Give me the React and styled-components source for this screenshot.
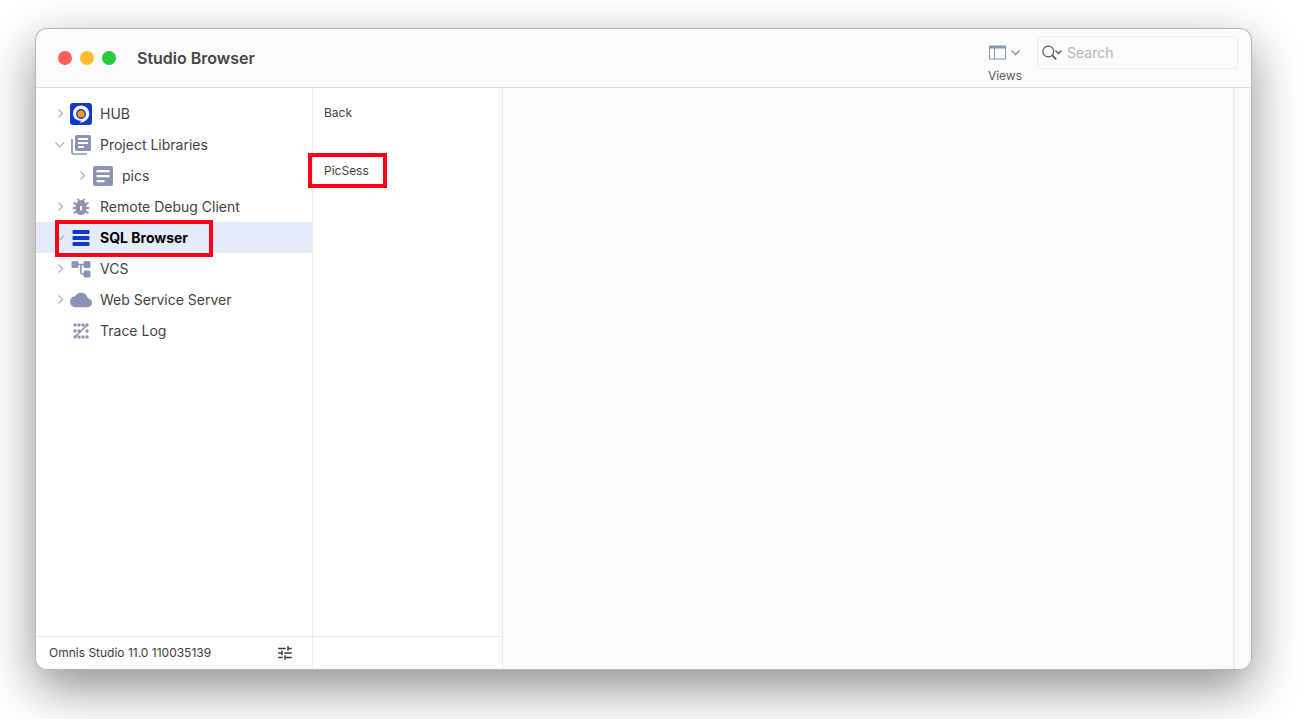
import React from "react";
import styled, { createGlobalStyle, css } from "styled-components";
import { MdCloud, MdTune } from "react-icons/md";

const GlobalStyle = createGlobalStyle`
  *, *::before, *::after {
    box-sizing: border-box;
  }
  body {
    margin: 0;
    overflow: hidden;
    background: #ffffff;
    color: #434343;
    font-family: Inter, "Liberation Sans", sans-serif;
  }
  button, input {
    font: inherit;
    color: inherit;
  }
`;

const Desktop = styled.div`
  display: flex;
  min-height: 100vh;
  padding: 29px 48px 50px 36px;
`;

const Window = styled.main`
  flex: 1;
  display: flex;
  flex-direction: column;
  min-width: 0;
  border-radius: 11px;
  background: #fbfbfb;
  box-shadow: 0 0 0 1px #b8b8b8, 0 18px 50px rgba(0, 0, 0, 0.46);
`;

const TitleBar = styled.header`
  display: flex;
  align-items: center;
  height: 59px;
  padding: 0 13px 0 22px;
  border-bottom: 1px solid #dcdcdc;
`;

const Lights = styled.div`
  display: flex;
  gap: 8px;
`;

const Light = styled.button`
  width: 14px;
  height: 14px;
  padding: 0;
  border: 0;
  border-radius: 50%;
  background: ${({ $color }) => $color};
`;

const Title = styled.h1`
  flex: 1;
  margin: 0 0 0 21px;
  font-size: 16px;
  font-weight: 600;
  line-height: 20px;
  color: #464646;
`;

const ViewsButton = styled.button`
  display: flex;
  flex-direction: column;
  align-items: center;
  gap: 8px;
  padding: 13px 0 0;
  border: 0;
  background: none;
  font-size: 12px;
  line-height: 16px;
  color: #5d5d5d;
`;

const SearchBox = styled.label`
  align-self: flex-start;
  display: flex;
  align-items: center;
  gap: 5px;
  width: 201px;
  height: 33px;
  margin: 7px 0 0 15px;
  padding: 0 4px;
  border: 1px solid #ececec;
  border-radius: 5px;
`;

const SearchInput = styled.input`
  flex: 1;
  min-width: 0;
  padding: 0;
  border: 0;
  outline: 0;
  background: none;
  font-size: 14px;

  &::placeholder {
    color: #b5b5b5;
    opacity: 1;
  }
`;

const Body = styled.div`
  flex: 1;
  display: flex;
`;

const panel = css`
  display: flex;
  flex-direction: column;
  border-right: 1px solid #ebebeb;
  background: #ffffff;
`;

const Sidebar = styled.nav`
  ${panel}
  width: 277px;
  border-radius: 0 0 0 11px;
`;

const Actions = styled.section`
  ${panel}
  width: 190px;
`;

const List = styled.ul`
  flex: 1;
  margin: 0;
  padding: 10px 0 0;
  list-style: none;
`;

const ActionList = styled(List)`
  padding: 15px 12px 0 11px;
`;

const TreeItem = styled.li`
  position: relative;
  display: flex;
  align-items: center;
  height: 31px;
  padding-left: ${({ $level }) => ($level ? 40 : 18)}px;
  background: ${({ $selected }) => ($selected ? "#e5ecf9" : "none")};
`;

const Toggle = styled.span`
  display: flex;
  justify-content: center;
  width: 13px;
`;

const TreeButton = styled.button`
  display: flex;
  align-items: center;
  gap: 6px;
  padding: 0 0 0 1px;
  border: 0;
  background: none;
  font-size: 14px;
  line-height: 20px;
  font-weight: ${({ $selected }) => ($selected ? 700 : 400)};
  color: ${({ $selected }) => ($selected ? "#000000" : "#434343")};
`;

const IconSlot = styled.span`
  display: flex;
  align-items: center;
  justify-content: center;
  width: 26px;
  height: 26px;
  color: #8b95b1;
`;

const ActionItem = styled.li`
  position: relative;
  display: flex;
  height: 20px;
  margin-bottom: 38px;
`;

const ActionButton = styled.button`
  padding: 0;
  border: 0;
  background: none;
  font-size: 12px;
  line-height: 20px;
`;

const Highlight = styled.span`
  position: absolute;
  top: ${({ $top }) => $top}px;
  left: ${({ $left }) => $left}px;
  width: ${({ $width }) => $width}px;
  height: ${({ $height }) => $height}px;
  border: 4px solid #ff0019;
  pointer-events: none;
  z-index: 1;
`;

const Footer = styled.footer`
  display: flex;
  align-items: center;
  justify-content: space-between;
  height: 33px;
  padding: 0 18px 0 13px;
  border-top: 1px solid #ebebeb;
  font-size: 12px;
  line-height: 16px;
  color: #3b3b3b;
`;

const IconButton = styled.button`
  display: flex;
  padding: 0;
  border: 0;
  background: none;
`;

const Content = styled.section`
  flex: 1;
  border-right: 2px solid #efefef;
`;

const Gutter = styled.div`
  width: 16px;
  border-right: 2px solid #f0f0f0;
  border-radius: 0 0 11px 0;
`;

const Chevron = ({ open, color = "#b3b3b3" }) => (
  <svg width="11" height="11" viewBox="0 0 11 11" fill="none" stroke={color} strokeWidth="1.3">
    <path d={open ? "M.5 3.5 4.800 7.800 9.100 3.500" : "M3.500 1.500 7.500 5.500 3.500 9.500"} />
  </svg>
);

const HubIcon = () => (
  <svg width="22" height="22" viewBox="0 0 22 22">
    <rect width="22" height="22" rx="3" fill="#1138cc" />
    <path d="M11.200 2.400c4.700 0 8 3.600 8 8.300 0 5-4 8.700-9.900 8.900 1.300-.7 2-1.200 2.200-2C6.600 18 3 15 3 10.500c0-4.700 3.600-8.100 8.200-8.100z" fill="#fff" />
    <circle cx="11" cy="11" r="4.900" fill="#1138cc" />
    <circle cx="11" cy="11" r="3.500" fill="#ff9818" />
  </svg>
);

const LibrariesIcon = () => (
  <svg width="20" height="20" viewBox="0 0 20 20" fill="none">
    <path d="M1 4v13.500c0 .9.6 1.500 1.500 1.500H16" stroke="currentColor" strokeWidth="1.700" />
    <rect x="4" width="16" height="16" rx="1.800" fill="currentColor" />
    <path d="M7 4h10M7 8h10M7 12h6" stroke="#fff" strokeWidth="1.800" />
  </svg>
);

const LibraryIcon = () => (
  <svg width="20" height="20" viewBox="0 0 20 20" fill="none">
    <rect width="20" height="20" rx="2.200" fill="currentColor" />
    <path d="M3.500 5.200h13M3.500 10.200h13M3.500 15.200h8" stroke="#fff" strokeWidth="2.200" />
  </svg>
);

const BugIcon = () => (
  <svg width="18" height="18" viewBox="0 0 18 18" fill="none" stroke="currentColor">
    <path d="M5.500.8 8 3.500M12.500.8 10 3.500" strokeWidth="1.600" />
    <path d="m1.500 4.500 3 2M16.500 4.500l-3 2M.8 10h16.400M1.500 15.200l3-1.700M16.500 15.200l-3-1.700" strokeWidth="1.800" />
    <path d="M9 2.300c2.800 0 4.900 2.200 5.300 5v4.200c0 3.200-2.200 5.500-5.300 5.500s-5.300-2.300-5.300-5.500V7.300c.4-2.800 2.500-5 5.300-5z" fill="currentColor" stroke="none" />
    <path d="M9 8v4.500" stroke="#fff" strokeWidth="1.800" />
  </svg>
);

const SqlIcon = () => (
  <svg width="18" height="16" viewBox="0 0 18 16" fill="#1138cc">
    <rect width="17" height="4" x=".5" y="0" rx="1" />
    <rect width="17" height="4" x=".5" y="6" rx="1" />
    <rect width="17" height="4" x=".5" y="12" rx="1" />
  </svg>
);

const VcsIcon = () => (
  <svg width="20" height="18" viewBox="0 0 20 18" fill="currentColor">
    <rect x=".5" y="1" width="7" height="7" rx="1.600" />
    <rect x="12.500" y="1" width="7" height="7" rx="1.600" />
    <rect x="12.500" y="10.500" width="7" height="7" rx="1.600" />
    <path d="M7 4.500h6M10 4.500v8c0 1 .5 1.500 1.500 1.500H13" fill="none" stroke="currentColor" strokeWidth="1.600" />
  </svg>
);

// dots the trend line does not pass through
const dots = [[2, 2], [6, 2], [10, 2], [2, 8], [6, 8], [14, 8], [6, 14], [10, 14], [14, 14]];

const TraceIcon = () => (
  <svg width="16" height="16" viewBox="0 0 16 16" fill="currentColor">
    {dots.map(([x, y]) => (
      <circle key={`${x}-${y}`} cx={x} cy={y} r="1.700" />
    ))}
    <path d="M2 14 14 2" fill="none" stroke="currentColor" strokeWidth="1.700" />
    <circle cx="2" cy="14" r="1.700" />
    <circle cx="14" cy="2" r="1.700" />
  </svg>
);

const ViewsIcon = () => (
  <svg width="32" height="15" viewBox="0 0 32 15" fill="none" stroke="#8a96b5">
    <path d="M.5 1.500h16v12.500H.5zM5.500 3v11" />
    <path d="M0 2h17" strokeWidth="3" />
    <path d="m22.500 5.500 4 4 4-4" strokeWidth="1.500" />
  </svg>
);

const SearchIcon = () => (
  <svg width="20" height="16" viewBox="0 0 20 16" fill="none" stroke="#5a5a5a">
    <circle cx="6.300" cy="6.500" r="5.400" strokeWidth="1.200" />
    <path d="m10.200 10.400 4 4" strokeWidth="1.700" />
    <path d="m13.500 5.500 3 3 3-3" strokeWidth="1.400" />
  </svg>
);

const tree = [
  { label: "HUB", icon: <HubIcon />, toggle: "closed" },
  { label: "Project Libraries", icon: <LibrariesIcon />, toggle: "open" },
  { label: "pics", icon: <LibraryIcon />, toggle: "closed", level: 1 },
  { label: "Remote Debug Client", icon: <BugIcon />, toggle: "closed" },
  { label: "SQL Browser", icon: <SqlIcon />, toggle: "open", selected: true },
  { label: "VCS", icon: <VcsIcon />, toggle: "closed" },
  { label: "Web Service Server", icon: <MdCloud size={22} />, toggle: "closed" },
  { label: "Trace Log", icon: <TraceIcon /> },
];

const App = () => {
  return (
    <>
      <GlobalStyle />
      <Desktop>
        <Window>
          <TitleBar>
            <Lights>
              <Light $color="#ff5f57" aria-label="Close" />
              <Light $color="#febc2e" aria-label="Minimize" />
              <Light $color="#28c840" aria-label="Zoom" />
            </Lights>
            <Title>Studio Browser</Title>
            <ViewsButton>
              <ViewsIcon />
              Views
            </ViewsButton>
            <SearchBox>
              <SearchIcon />
              <SearchInput type="text" placeholder="Search" aria-label="Search" />
            </SearchBox>
          </TitleBar>
          <Body>
            <Sidebar>
              <List>
                {tree.map(({ label, icon, toggle, level, selected }) => (
                  <TreeItem key={label} $level={level} $selected={selected}>
                    <Toggle>{toggle && <Chevron open={toggle === "open"} />}</Toggle>
                    <TreeButton $selected={selected}>
                      <IconSlot>{icon}</IconSlot>
                      {label}
                    </TreeButton>
                    {selected && <Highlight $top={-2} $left={19} $width={158} $height={37} />}
                  </TreeItem>
                ))}
              </List>
              <Footer>
                Omnis Studio 11.0 110035139
                <IconButton aria-label="Options">
                  <MdTune size={18} />
                </IconButton>
              </Footer>
            </Sidebar>
            <Actions>
              <ActionList>
                <ActionItem>
                  <ActionButton>Back</ActionButton>
                </ActionItem>
                <ActionItem>
                  <ActionButton>PicSess</ActionButton>
                  <Highlight $top={-8} $left={-16} $width={79} $height={35} />
                </ActionItem>
              </ActionList>
              <Footer />
            </Actions>
            <Content />
            <Gutter />
          </Body>
        </Window>
      </Desktop>
    </>
  );
};

export default App;
